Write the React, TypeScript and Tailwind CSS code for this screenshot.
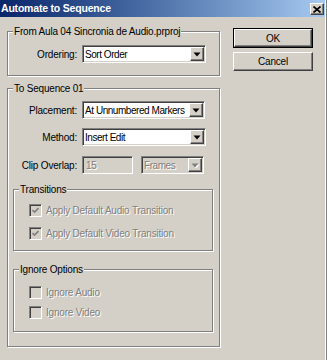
import { clsx } from "clsx";

const raised =
  "border border-t-white border-l-white border-r-[#404040] border-b-[#404040] shadow-[inset_-1px_-1px_0_#808080]";
const sunken =
  "border border-t-[#808080] border-l-[#808080] border-r-white border-b-white shadow-[inset_1px_1px_0_#404040,inset_-1px_-1px_0_#d4d0c8]";
const etched = "border border-[#808080] shadow-[1px_1px_0_#fff,inset_1px_1px_0_#fff]";
const disabledText = "text-[#808080] [text-shadow:1px_1px_0_#fff]";

function Arrow({ disabled }: { disabled?: boolean }) {
  return (
    <div className={clsx("mr-[1px] flex h-[14px] w-[14px] shrink-0 items-center justify-center bg-[#d4d0c8]", raised)}>
      <svg width="8" height="5" viewBox="0 0 8 5" className={disabled ? "drop-shadow-[1px_1px_0_#fff]" : ""}>
        <polygon points="0.5,0.5 7.5,0.5 4,4.5" fill={disabled ? "#808080" : "#000"} />
      </svg>
    </div>
  );
}

function Select({ value, width, disabled }: { value: string; width: string; disabled?: boolean }) {
  return (
    <div className={clsx("flex h-[18px] items-center", sunken, disabled ? "bg-[#d4d0c8]" : "bg-white", width)}>
      <span
        className={clsx(
          "min-w-0 flex-1 overflow-hidden whitespace-nowrap pl-[2px] leading-[13px] tracking-[-0.45px]",
          disabled ? disabledText : "text-black",
        )}
      >
        {value}
      </span>
      <Arrow disabled={disabled} />
    </div>
  );
}

function Row({ label, children, className }: { label: string; children: React.ReactNode; className?: string }) {
  return (
    <div className={clsx("flex items-center", className)}>
      <span className="w-[70px] pr-[1px] text-right leading-[13px] text-black">{label}</span>
      <div className="ml-[4px] flex items-center gap-[8px]">{children}</div>
    </div>
  );
}

function Check({ label, checked, className }: { label: string; checked?: boolean; className?: string }) {
  return (
    <div className={clsx("ml-[15px] flex items-center", className)}>
      <div className={clsx("flex h-[13px] w-[13px] items-center justify-center bg-[#d4d0c8]", sunken)}>
        {checked && (
          <svg width="7" height="7" viewBox="0 0 7 7">
            <path d="M0.5 3 L2.5 5 L6.5 1" stroke="#808080" strokeWidth="1.6" fill="none" />
          </svg>
        )}
      </div>
      <span className={clsx("ml-[4px] leading-[13px]", disabledText)}>{label}</span>
    </div>
  );
}

function Group({ title, children, className }: { title: string; children: React.ReactNode; className?: string }) {
  return (
    <div className={clsx(etched, className)}>
      <div className="-mt-[7px] ml-[5px] w-fit bg-[#d4d0c8] px-[1px] leading-[13px] text-black">{title}</div>
      {children}
    </div>
  );
}

export default function App() {
  return (
    <div className="flex h-[360px] w-[327px] flex-col overflow-hidden border-r border-r-[#808080] bg-[#d4d0c8] font-['Liberation_Sans',Arial,sans-serif] text-[10px] tracking-[-0.2px] shadow-[inset_-1px_0_0_#fff]">
      <div className="mr-[1px] flex h-[17px] shrink-0 items-center justify-between bg-gradient-to-r from-[#0a246a] to-[#a6caf0] pl-[1px]">
        <span className="text-[10.5px] font-bold leading-[13px] text-white">Automate to Sequence</span>
        <div className={clsx("mr-[1px] mt-[1px] flex h-[12px] w-[14px] items-center justify-center bg-[#d4d0c8]", raised)}>
          <svg width="8" height="7" viewBox="0 0 8 7">
            <path d="M0.5 0.5 L7.5 6.5 M7.5 0.5 L0.5 6.5" stroke="#000" strokeWidth="1.7" />
          </svg>
        </div>
      </div>

      <div className="flex pt-[11px]">
        <div className="ml-[7px] mt-[3px] w-[213px]">
          <Group title="From Aula 04 Sincronia de Audio.prproj" className="pb-[12px]">
            <Row label="Ordering:" className="mt-[7px]">
              <Select value="Sort Order" width="w-[124px]" />
            </Row>
          </Group>

          <Group title="To Sequence 01" className="mt-[12px] pb-[14px]">
            <Row label="Placement:" className="mt-[6px]">
              <Select value="At Unnumbered Markers" width="w-[123px]" />
            </Row>
            <Row label="Method:" className="mt-[9px]">
              <Select value="Insert Edit" width="w-[124px]" />
            </Row>
            <Row label="Clip Overlap:" className="mt-[10px]">
              <div className={clsx("flex h-[18px] w-[51px] items-center bg-[#d4d0c8] pl-[3px]", sunken)}>
                <span className={clsx("leading-[13px]", disabledText)}>15</span>
              </div>
              <Select value="Frames" width="w-[63px]" disabled />
            </Row>

            <Group title="Transitions" className="ml-[5px] mt-[15px] w-[200px] pb-[10px]">
              <Check label="Apply Default Audio Transition" checked className="mt-[8px]" />
              <Check label="Apply Default Video Transition" checked className="mt-[10px]" />
            </Group>

            <Group title="Ignore Options" className="ml-[5px] mt-[18px] w-[200px] pb-[12px]">
              <Check label="Ignore Audio" className="mt-[10px]" />
              <Check label="Ignore Video" className="mt-[7px]" />
            </Group>
          </Group>
        </div>

        <div className="ml-[13px] flex flex-col">
          <div className="h-[20px] w-[80px] border border-black">
            <div className={clsx("flex h-full w-full items-center justify-center bg-[#d4d0c8] text-black", raised)}>
              OK
            </div>
          </div>
          <div
            className={clsx(
              "mt-[4px] flex h-[19px] w-[80px] items-center justify-center bg-[#d4d0c8] text-black",
              raised,
            )}
          >
            Cancel
          </div>
        </div>
      </div>
    </div>
  );
}
